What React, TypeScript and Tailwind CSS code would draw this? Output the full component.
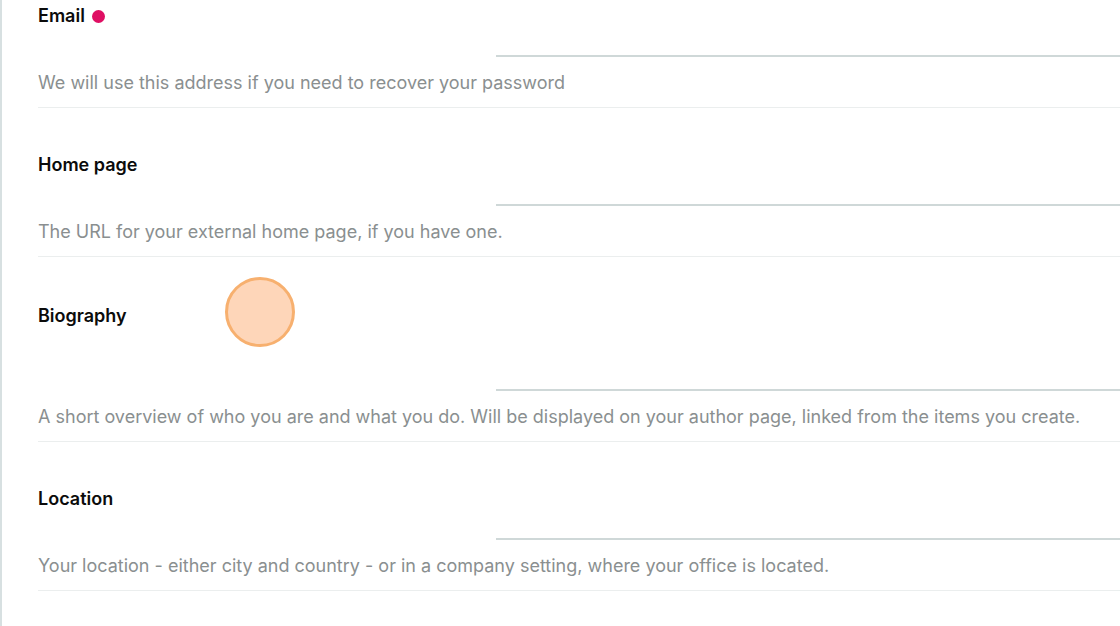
import React from "react";

type Field = {
  label: string;
  help: string;
  required?: boolean;
  inputHeight: string;
  labelOffset: string;
  first?: boolean;
};

const fields: Field[] = [
  {
    label: "Email",
    help: "We will use this address if you need to recover your password",
    required: true,
    inputHeight: "h-[56px]",
    labelOffset: "mt-[3px]",
    first: true,
  },
  {
    label: "Home page",
    help: "The URL for your external home page, if you have one.",
    inputHeight: "h-[57px]",
    labelOffset: "mt-[4px]",
  },
  {
    label: "Biography",
    help: "A short overview of who you are and what you do. Will be displayed on your author page, linked from the items you create.",
    inputHeight: "h-[93px]",
    labelOffset: "mt-[6px]",
  },
  {
    label: "Location",
    help: "Your location - either city and country - or in a company setting, where your office is located.",
    inputHeight: "h-[57px]",
    labelOffset: "mt-[4px]",
  },
];

const FormRow: React.FC<{ field: Field }> = ({ field }) => {
  return (
    <div
      className={`border-b border-[#ebeeee] pb-[12px] ${
        field.first ? "pt-[1px]" : "pt-[41px]"
      }`}
    >
      <div className="flex flex-row items-start">
        <div
          className={`flex w-[458px] shrink-0 items-center gap-[7px] ${field.labelOffset}`}
        >
          <span className="text-[18px] font-semibold leading-6 text-[#0b0b0b]">
            {field.label}
          </span>
          {field.required && (
            <span className="h-[13px] w-[13px] rounded-full bg-[#df0f63]" />
          )}
        </div>
        <div
          className={`flex-1 border-b-2 border-[#cfd8d8] ${field.inputHeight}`}
        />
      </div>
      <p className="mt-[14px] text-[18px] leading-6 text-[#8a8f90]">
        {field.help}
      </p>
    </div>
  );
};

export default function App() {
  return (
    <div
      className="relative h-[626px] w-[1120px] overflow-hidden bg-white"
      style={{ fontFamily: "Inter, 'Noto Sans', sans-serif" }}
    >
      <div className="flex h-full flex-row">
        <div className="w-[2px] shrink-0 bg-[#d7e0e1]" />
        <div className="flex-1 pl-[36px]">
          {fields.map((f) => (
            <FormRow key={f.label} field={f} />
          ))}
        </div>
      </div>
      <div className="absolute left-[225px] top-[277px] h-[70px] w-[70px] rounded-full border-[3px] border-[#f7b06f] bg-[#fed6b9]" />
    </div>
  );
}
